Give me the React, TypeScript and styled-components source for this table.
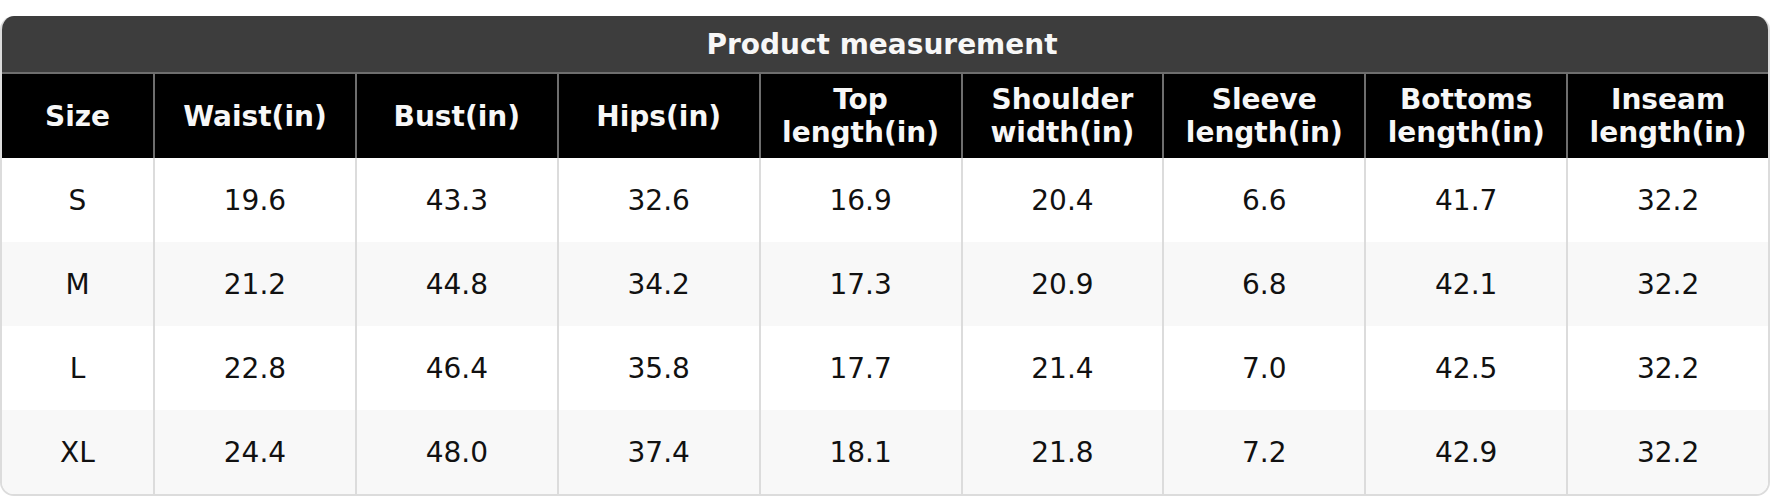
import React from 'react';
import styled, { createGlobalStyle } from 'styled-components';

const GlobalStyle = createGlobalStyle`
  html, body {
    margin: 0;
    padding: 0;
    background: #ffffff;
  }
  body {
    font-family: 'DejaVu Sans', 'Liberation Sans', sans-serif;
  }
`;

const Page = styled.div`
  padding-top: 16px;
  width: 1770px;
`;

const Card = styled.div`
  box-sizing: border-box;
  width: 1770px;
  border-radius: 14px;
  overflow: hidden;
  border: 2px solid #dcdcdc;
  border-top: none;
`;

const Title = styled.div`
  height: 56px;
  margin: 0 -2px;
  padding-right: 6px;
  background: #3d3d3d;
  color: #f7f7f7;
  font-size: 28px;
  font-weight: bold;
  display: flex;
  align-items: center;
  justify-content: center;
  border-bottom: 2px solid #6e6e6e;
`;

const Grid = styled.div`
  display: grid;
  grid-template-columns: 153px repeat(8, 1fr);
  margin-left: -2px;
`;

const HeadCell = styled.div`
  box-sizing: border-box;
  height: 84px;
  background: #000000;
  color: #f7f7f7;
  font-size: 28px;
  font-weight: bold;
  line-height: 33px;
  display: flex;
  align-items: center;
  justify-content: center;
  text-align: center;
  border-left: 2px solid #6e6e6e;
  &:first-child {
    border-left-color: #dcdcdc;
  }
`;

const Cell = styled.div<{ $shade: boolean }>`
  box-sizing: border-box;
  height: 84px;
  background: ${(p) => (p.$shade ? '#f8f8f8' : '#ffffff')};
  color: #111111;
  font-size: 28px;
  display: flex;
  align-items: center;
  justify-content: center;
  border-left: 2px solid #dcdcdc;
`;

const headers = [
  ['Size'],
  ['Waist(in)'],
  ['Bust(in)'],
  ['Hips(in)'],
  ['Top', 'length(in)'],
  ['Shoulder', 'width(in)'],
  ['Sleeve', 'length(in)'],
  ['Bottoms', 'length(in)'],
  ['Inseam', 'length(in)'],
];

const rows = [
  ['S', '19.6', '43.3', '32.6', '16.9', '20.4', '6.6', '41.7', '32.2'],
  ['M', '21.2', '44.8', '34.2', '17.3', '20.9', '6.8', '42.1', '32.2'],
  ['L', '22.8', '46.4', '35.8', '17.7', '21.4', '7.0', '42.5', '32.2'],
  ['XL', '24.4', '48.0', '37.4', '18.1', '21.8', '7.2', '42.9', '32.2'],
];

export default function App() {
  return (
    <Page>
      <GlobalStyle />
      <Card>
        <Title>Product measurement</Title>
        <Grid>
          {headers.map((h, i) => (
            <HeadCell key={i}>
              <span>
                {h.map((line, j) => (
                  <React.Fragment key={j}>
                    {j > 0 && <br />}
                    {line}
                  </React.Fragment>
                ))}
              </span>
            </HeadCell>
          ))}
          {rows.map((r, ri) =>
            r.map((v, ci) => (
              <Cell key={`${ri}-${ci}`} $shade={ri % 2 === 1}>
                {v}
              </Cell>
            ))
          )}
        </Grid>
      </Card>
    </Page>
  );
}
